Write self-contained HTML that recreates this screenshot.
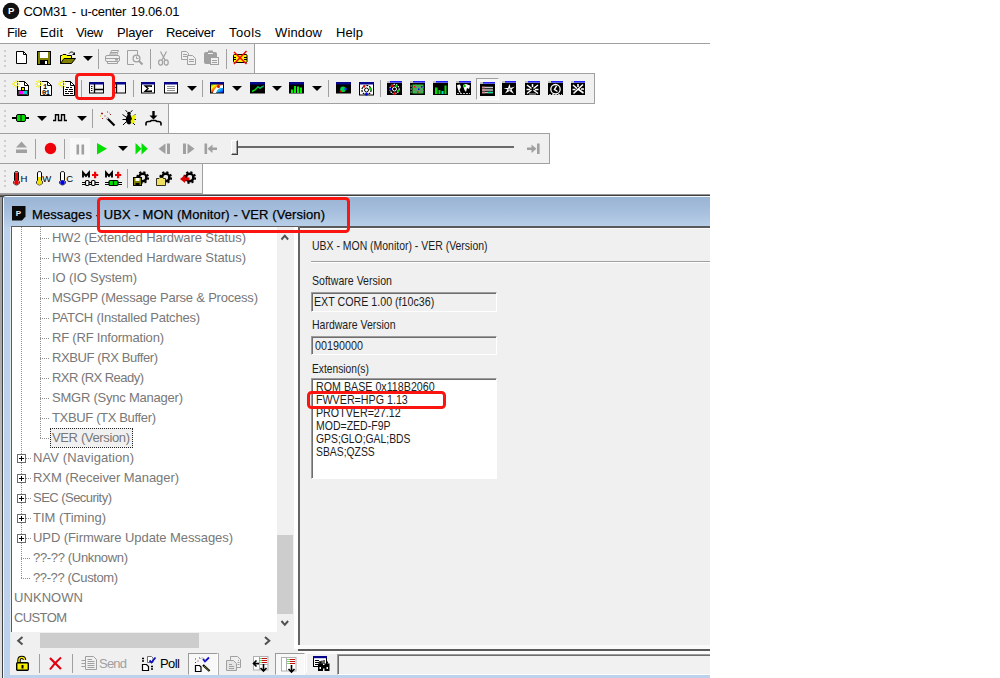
<!DOCTYPE html>
<html><head><meta charset="utf-8"><title>u-center</title>
<style>
html,body{margin:0;padding:0;background:#fff;}
body{width:1000px;height:678px;position:relative;overflow:hidden;font-family:"Liberation Sans",sans-serif;}
.t{position:absolute;white-space:nowrap;line-height:20px;height:20px;font-family:"Liberation Sans",sans-serif;}
.a{position:absolute;}
.tb{position:absolute;left:0;height:29px;background:#f0f0f0;border-right:1px solid #a0a0a0;border-bottom:1px solid #a0a0a0;border-top:1px solid #a0a0a0;}
.grip{position:absolute;left:4px;width:2px;height:17px;background:repeating-linear-gradient(to bottom,#cecece 0,#cecece 2px,transparent 2px,transparent 5px);}
.sep{position:absolute;width:1px;height:22px;background:#a0a0a0;}
svg{position:absolute;overflow:visible;}
.dd{position:absolute;width:0;height:0;border-left:5px solid transparent;border-right:5px solid transparent;border-top:5px solid #000;}
.fld{box-sizing:border-box;border:1px solid;border-color:#9c9c9c #fff #fff #9c9c9c;box-shadow:inset 1px 1px 0 #6e6e6e;}

</style></head>
<body>
<!-- app title icon -->
<svg class="a" style="left:2px;top:2px" width="18" height="18" viewBox="0 0 18 18"><circle cx="9" cy="9" r="8.3" fill="#111"/><text x="9.2" y="12.4" font-family="Liberation Sans, sans-serif" font-size="9.5" font-weight="bold" fill="#fff" text-anchor="middle">P</text></svg>
<div class="a" style="left:0;top:43px;width:710px;height:1px;background:#a0a0a0"></div>
<!-- toolbars -->
<div class="tb" style="top:43px;width:254px"></div>
<div class="tb" style="top:73px;width:594px"></div>
<div class="tb" style="top:103px;width:168px"></div>
<div class="tb" style="top:133px;width:549px"></div>
<div class="tb" style="top:163px;width:202px"></div>
<div class="grip" style="top:50px"></div>
<div class="grip" style="top:80px"></div>
<div class="grip" style="top:110px"></div>
<div class="grip" style="top:140px"></div>
<div class="grip" style="top:170px"></div>
<svg style="left:16px;top:51px" width="12" height="14" viewBox="0 0 12 14" ><path d="M0.5 0.5H7.5L10.5 3.5V12.5H0.5Z" fill="#fff" stroke="#000"/><path d="M7.5 0.5V3.5H10.5" fill="none" stroke="#000"/></svg>
<svg style="left:37px;top:51px" width="15" height="14" viewBox="0 0 15 14" ><rect x="0.5" y="0.5" width="13" height="13" fill="#808000" stroke="#000"/><rect x="3" y="1" width="8" height="6" fill="#fff"/><rect x="3" y="9" width="8" height="4" fill="#000"/><rect x="8" y="10" width="2" height="3" fill="#fff"/></svg>
<svg style="left:60px;top:51px" width="16" height="14" viewBox="0 0 16 14" ><path d="M0.5 12.5V4.5H2L3 3.5H6L7 4.5H11.5V7" fill="#ffff00" stroke="#000"/><path d="M0.5 12.5L4 7.5H15.5L11.5 12.5Z" fill="#808000" stroke="#000"/><path d="M9 2.5C10.5 0.5 13 0.5 14 2.5" fill="none" stroke="#000"/><path d="M15 1V4H12Z" fill="#000"/></svg>
<div class="dd" style="left:83px;top:56px"></div>
<div class="sep" style="left:98px;top:49px;height:20px"></div>
<svg style="left:105px;top:50px" width="16" height="15" viewBox="0 0 16 15" ><path d="M4.5 5.5L6.5 0.5H13.5L11.5 5.5" fill="none" stroke="#a0a0a0"/><path d="M6 2.5H12M5.5 4H11" stroke="#a0a0a0"/><rect x="0.5" y="5.5" width="14" height="6" rx="1.5" fill="none" stroke="#a0a0a0"/><path d="M2.5 11.5V13.5H12.5V11.5M1 8.5H14" fill="none" stroke="#a0a0a0"/><rect x="10" y="9" width="3" height="1.5" fill="#a0a0a0"/></svg>
<svg style="left:127px;top:50px" width="17" height="16" viewBox="0 0 17 16" ><path d="M10.5 5V0.5H0.5V14.5H7" fill="none" stroke="#a0a0a0"/><circle cx="9.5" cy="8.5" r="3.4" fill="none" stroke="#a0a0a0" stroke-width="1.3"/><path d="M12 11L15.5 14.5" stroke="#a0a0a0" stroke-width="2"/><path d="M9.5 6.5V8.5H11.5" fill="none" stroke="#a0a0a0"/></svg>
<div class="sep" style="left:150px;top:49px;height:20px"></div>
<svg style="left:158px;top:51px" width="11" height="15" viewBox="0 0 11 15" ><path d="M2.5 0.5L7 9M8.5 0.5L4 9" stroke="#a0a0a0" fill="none" stroke-width="1.2"/><ellipse cx="2.6" cy="11.5" rx="2" ry="2.6" fill="none" stroke="#a0a0a0" stroke-width="1.2"/><ellipse cx="8.2" cy="11.5" rx="2" ry="2.6" fill="none" stroke="#a0a0a0" stroke-width="1.2"/></svg>
<svg style="left:181px;top:51px" width="16" height="14" viewBox="0 0 16 14" ><path d="M0.5 0.5H5.5L7.5 2.5V8.5H0.5Z" fill="#f0f0f0" stroke="#a0a0a0"/><path d="M2 3.5H6M2 5.5H6" stroke="#a0a0a0"/><path d="M6.5 4.5H11.5L14.5 7.5V13.5H6.5Z" fill="#f0f0f0" stroke="#a0a0a0"/><path d="M8 8.5H13M8 10.5H13" stroke="#a0a0a0"/></svg>
<svg style="left:204px;top:50px" width="16" height="16" viewBox="0 0 16 16" ><rect x="0.5" y="2.5" width="12" height="11" rx="1" fill="#a0a0a0" stroke="#a0a0a0"/><rect x="4" y="0.5" width="5" height="3" fill="#a0a0a0"/><rect x="4" y="3" width="5" height="1" fill="#f0f0f0"/><rect x="6.5" y="7.5" width="8" height="7" fill="#f0f0f0" stroke="#a0a0a0"/><path d="M8 10.5H13M8 12.5H13" stroke="#a0a0a0"/></svg>
<div class="sep" style="left:226px;top:49px;height:20px"></div>
<svg style="left:233px;top:51px" width="15" height="15" viewBox="0 0 15 15" ><rect x="0.500" y="3.500" width="13.500" height="8" rx="1" fill="#ffee00" stroke="#000"/><path d="M0.500 6.500H3M11 6.500H14M0.500 8.500H3M11 8.500H14" stroke="#000"/><path d="M1 1L13.500 13M13.500 0L1 13" stroke="#f00" stroke-width="1.500"/></svg>
<svg style="left:12px;top:80px" width="18" height="16" viewBox="0 0 18 16" ><path d="M5.5 1.5H12.5L16.5 5.5V15.5H5.5Z" fill="#fff" stroke="#000"/><path d="M12.5 1.5V5.5H16.5" fill="none" stroke="#000"/><rect x="9.500" y="7.500" width="3" height="3" fill="#ffee00" stroke="#000" stroke-width="1"/><rect x="7" y="11" width="4" height="3" fill="#ff00ff"/><rect x="11" y="11" width="4" height="3" fill="#00d0d0"/><rect x="6.5" y="10.5" width="9" height="4" fill="none" stroke="#000" stroke-width="0.8"/><path d="M4 0V8M0 4H8M1.2 1.2L6.8 6.8M6.8 1.2L1.2 6.8" stroke="#f0f000" stroke-width="1"/><rect x="3" y="3" width="2" height="2" fill="#fff"/></svg>
<svg style="left:35px;top:80px" width="18" height="16" viewBox="0 0 18 16" ><path d="M5.5 1.5H12.5L16.5 5.5V15.5H5.5Z" fill="#fff" stroke="#000"/><path d="M12.5 1.5V5.5H16.5" fill="none" stroke="#000"/><text x="8" y="9" font-family="Liberation Mono, monospace" font-size="7" font-weight="bold" fill="#000">1</text><text x="7" y="15" font-family="Liberation Mono, monospace" font-size="7" font-weight="bold" fill="#000" letter-spacing="-0.5">01</text><path d="M4 0V8M0 4H8M1.2 1.2L6.8 6.8M6.8 1.2L1.2 6.8" stroke="#f0f000" stroke-width="1"/><rect x="3" y="3" width="2" height="2" fill="#fff"/></svg>
<svg style="left:58px;top:80px" width="18" height="16" viewBox="0 0 18 16" ><path d="M5.5 1.5H12.5L16.5 5.5V15.5H5.5Z" fill="#fff" stroke="#000"/><path d="M12.5 1.5V5.5H16.5" fill="none" stroke="#000"/><path d="M8 7.5H11M12 7.5H14M7 9.5H10M11 9.5H15M7 11.5H9M10 11.5H15M7 13.5H11M12 13.5H15" stroke="#000" stroke-width="1.2"/><path d="M4 0V8M0 4H8M1.2 1.2L6.8 6.8M6.8 1.2L1.2 6.8" stroke="#f0f000" stroke-width="1"/><rect x="3" y="3" width="2" height="2" fill="#fff"/></svg>
<div class="sep" style="left:81px;top:80px;height:17px"></div>
<svg style="left:89px;top:82px" width="15" height="13" viewBox="0 0 15 13" ><rect x="0.5" y="0.5" width="14" height="10.5" fill="#f4f4f4" stroke="#000"/><rect x="0" y="0" width="15" height="2.5" fill="#06068c"/><path d="M5.5 2V11M5.5 7.5H14" stroke="#000" stroke-width="1.3"/><path d="M2 4.5H4M2 6.5H4M2 8.5H4" stroke="#000" stroke-width="1" stroke-dasharray="1 0.6"/></svg>
<svg style="left:112px;top:82px" width="14" height="13" viewBox="0 0 14 13" ><rect x="0.5" y="0.5" width="13" height="10.5" fill="#f4f4f4" stroke="#000"/><rect x="0" y="0" width="14" height="2.5" fill="#06068c"/><path d="M4.5 2V11" stroke="#000" stroke-width="1.3"/><path d="M2 5.5H4" stroke="#000"/></svg>
<div class="sep" style="left:133px;top:80px;height:17px"></div>
<svg style="left:141px;top:82px" width="14" height="13" viewBox="0 0 14 13" ><rect x="0.5" y="0.5" width="13" height="10.5" fill="#fff" stroke="#000"/><rect x="0" y="0" width="14" height="2.5" fill="#06068c"/><path d="M10.3 5V4H4.2L7 6.6L4.2 9.200H10.3V8.200" fill="none" stroke="#000" stroke-width="1.400"/></svg>
<svg style="left:164px;top:82px" width="14" height="13" viewBox="0 0 14 13" ><rect x="0.5" y="0.5" width="13" height="10.5" fill="#fff" stroke="#000"/><rect x="0" y="0" width="14" height="2.500" fill="#06068c"/><path d="M3 4.500H11M3 6.500H11M3 8.500H11" stroke="#909090" stroke-width="1"/></svg>
<div class="dd" style="left:187px;top:86px"></div>
<div class="sep" style="left:202px;top:80px;height:17px"></div>
<svg style="left:210px;top:82px" width="14" height="13" viewBox="0 0 14 13" ><defs><linearGradient id="rb" x1="0" y1="0" x2="1" y2="1"><stop offset="0" stop-color="#00a000"/><stop offset="0.3" stop-color="#ffff00"/><stop offset="0.5" stop-color="#ff4000"/><stop offset="0.7" stop-color="#00c0ff"/><stop offset="1" stop-color="#0000ff"/></linearGradient></defs><rect x="0.5" y="0.5" width="13" height="10.5" fill="url(#rb)" stroke="#000"/><rect x="0" y="0" width="14" height="2.5" fill="#06068c"/><path d="M3 11C4 7 7 4 10 3.5L13 3V6C10 6 8 6 6 11Z" fill="#fff"/><circle cx="8.5" cy="4.5" r="1.5" fill="#c02000"/></svg>
<div class="dd" style="left:232px;top:86px"></div>
<svg style="left:249.5px;top:82px" width="15" height="13" viewBox="0 0 15 13" ><rect x="0.5" y="0.5" width="14" height="10.5" fill="#000" stroke="#000"/><rect x="0" y="0" width="15" height="2.5" fill="#06068c"/><path d="M2 9.5L5 8L8 4.8L10 6.2L13.500 4" fill="none" stroke="#00e000" stroke-width="1.4"/><path d="M8 4.800L10 6.200L13.500 4" fill="none" stroke="#00a0a0" stroke-width="1"/></svg>
<div class="dd" style="left:272px;top:86px"></div>
<svg style="left:289px;top:82px" width="15" height="13" viewBox="0 0 15 13" ><rect x="0.5" y="0.5" width="14" height="10.5" fill="#000" stroke="#000"/><rect x="0" y="0" width="15" height="2.5" fill="#06068c"/><path d="M3 11V7.500M6 11V4M9 11V4.500M12 11V5.500" stroke="#00f000" stroke-width="2"/></svg>
<div class="dd" style="left:312px;top:86px"></div>
<div class="sep" style="left:328px;top:80px;height:17px"></div>
<svg style="left:336px;top:82px" width="15" height="13" viewBox="0 0 15 13" ><rect x="0.5" y="0.5" width="14" height="10.5" fill="#000" stroke="#000"/><rect x="0" y="0" width="15" height="2.5" fill="#06068c"/><circle cx="7" cy="7.200" r="2.800" fill="#00d040"/><circle cx="9.5" cy="7" r="1.3" fill="#0040ff"/><circle cx="4.5" cy="9.5" r="1" fill="#d00000"/></svg>
<svg style="left:359px;top:82px" width="15" height="14" viewBox="0 0 15 14" ><rect x="0.5" y="0.5" width="14" height="12.5" fill="#fff" stroke="#000"/><rect x="0" y="0" width="15" height="2.5" fill="#06068c"/><circle cx="7.5" cy="8" r="4.6" fill="none" stroke="#000" stroke-width="1.2" stroke-dasharray="2 1"/><circle cx="7.5" cy="8" r="2" fill="none" stroke="#000" stroke-width="1"/><circle cx="5" cy="4.5" r="1.2" fill="#f00000"/><circle cx="11.5" cy="7" r="1.4" fill="#00d000"/><circle cx="7.5" cy="12" r="1.5" fill="#0000ff"/></svg>
<div class="sep" style="left:380px;top:80px;height:17px"></div>
<svg style="left:387px;top:81px" width="15" height="14" viewBox="0 0 15 14" ><rect x="0" y="0.5" width="15" height="13.5" fill="#000"/><rect x="0" y="0" width="15" height="2" fill="#c0c0c0"/><rect x="3" y="0" width="12" height="1.6" fill="#2020ff"/><circle cx="7.5" cy="8" r="4.6" fill="none" stroke="#fff" stroke-width="1.2" stroke-dasharray="1.5 1"/><circle cx="7.5" cy="8" r="2" fill="none" stroke="#fff" stroke-width="1"/><circle cx="5" cy="4.8" r="1.3" fill="#f00000"/><circle cx="9.5" cy="5" r="1.2" fill="#00d000"/><circle cx="3" cy="8" r="1.2" fill="#0000ff"/><circle cx="11" cy="10" r="1.2" fill="#00d000"/><circle cx="7.5" cy="12.5" r="1.2" fill="#f00000"/></svg>
<svg style="left:410px;top:81px" width="15" height="14" viewBox="0 0 15 14" ><rect x="0" y="0.5" width="15" height="13.5" fill="#000"/><rect x="0" y="0" width="15" height="2" fill="#c0c0c0"/><rect x="3" y="0" width="12" height="1.6" fill="#2020ff"/><rect x="2.5" y="3.5" width="11" height="9" fill="#30c040"/><path d="M2.5 6.5H13.5M2.5 9.5H13.5M6 3.5V12.5M10 3.5V12.5" stroke="#808080" stroke-width="0.8"/><rect x="4" y="5" width="1.5" height="1.5" fill="#f00"/><rect x="8" y="7.5" width="1.5" height="1.5" fill="#00f"/><rect x="11" y="5" width="1.5" height="1.5" fill="#00f"/><rect x="7" y="10.5" width="1.5" height="1.5" fill="#f00"/><path d="M0.5 5H2M0.5 8H2M0.5 11H2" stroke="#c0c0c0"/></svg>
<svg style="left:433px;top:81px" width="15" height="14" viewBox="0 0 15 14" ><rect x="0" y="0.5" width="15" height="13.5" fill="#000"/><rect x="0" y="0" width="15" height="2" fill="#c0c0c0"/><rect x="3" y="0" width="12" height="1.6" fill="#2020ff"/><rect x="2" y="6.500" width="2.5" height="6.500" fill="#00e000"/><rect x="5.500" y="9" width="2" height="4" fill="#00e000"/><rect x="8.500" y="10" width="2" height="3" fill="#00e0e0"/><rect x="11.500" y="4.500" width="2" height="8.500" fill="#00e000"/></svg>
<svg style="left:456px;top:81px" width="15" height="14" viewBox="0 0 15 14" ><rect x="0" y="0.5" width="15" height="13.5" fill="#000"/><rect x="0" y="0" width="15" height="2" fill="#c0c0c0"/><rect x="3" y="0" width="12" height="1.6" fill="#2020ff"/><path d="M1 4L4 3.500L5 6L3.500 9L5 12L3 11L1.500 7ZM7 4L10 3L14 4.500L13 8L11 7L10 11L8.500 9L7.500 6Z" fill="#fff"/><circle cx="8.500" cy="5" r="1.300" fill="#00d000"/><path d="M1 12.500H14" stroke="#c0c0c0" stroke-dasharray="2 1"/></svg>
<div class="a" style="left:476px;top:78px;width:23px;height:22px;box-sizing:border-box;background:#f6f6f6;border:1px solid;border-color:#a0a0a0 #fff #fff #a0a0a0"></div>
<svg style="left:480px;top:82px" width="15" height="14" viewBox="0 0 15 14" ><rect x="0" y="0.5" width="15" height="13.5" fill="#000"/><rect x="0" y="0" width="15" height="2" fill="#c0c0c0"/><rect x="3" y="0" width="12" height="1.6" fill="#2020ff"/><path d="M2 5.500H13M2 8H13M2 10.500H13" stroke="#c8c8c8" stroke-width="1.300"/><path d="M2 5.500H5M2 8H5M2 10.500H5" stroke="#d09090" stroke-width="1.300"/><path d="M8 10.500H13" stroke="#00e0a0" stroke-width="1.300"/></svg>
<svg style="left:502px;top:81px" width="14" height="14" viewBox="0 0 14 14" ><rect x="0" y="0.5" width="14" height="13.5" fill="#000"/><rect x="0" y="0" width="14" height="2" fill="#c0c0c0"/><rect x="3" y="0" width="11" height="1.6" fill="#2020ff"/><path d="M7.500 3L8.500 7L13 5.500L9.500 8.500L12 13L7.500 10L3 12.500L5.500 8.500L1.500 7L6 7Z" fill="#fff"/><circle cx="7.500" cy="8.500" r="1.200" fill="#808080"/></svg>
<svg style="left:525px;top:81px" width="15" height="14" viewBox="0 0 15 14" ><rect x="0" y="0.5" width="15" height="13.5" fill="#000"/><rect x="0" y="0" width="15" height="2" fill="#c0c0c0"/><rect x="3" y="0" width="12" height="1.6" fill="#2020ff"/><path d="M2 4L6.500 7.500M13 4L8.500 7.500M2 12.500L6.500 9M13 12.500L8.500 9M7.500 3V6M1.500 8.500H5M10 8.500H13.500" stroke="#fff" stroke-width="1.500"/><path d="M4 13H11" stroke="#c0c0c0"/></svg>
<svg style="left:548px;top:81px" width="15" height="14" viewBox="0 0 15 14" ><rect x="0" y="0.5" width="15" height="13.5" fill="#000"/><rect x="0" y="0" width="15" height="2" fill="#c0c0c0"/><rect x="3" y="0" width="12" height="1.6" fill="#2020ff"/><circle cx="7.500" cy="8.200" r="4.700" fill="none" stroke="#fff" stroke-width="1.300"/><path d="M8.500 5L6.500 8.500L9.500 10.500" fill="none" stroke="#fff" stroke-width="1.500"/><path d="M1 13.500H14" stroke="#c0c0c0" stroke-dasharray="2 1"/></svg>
<svg style="left:571px;top:81px" width="14" height="14" viewBox="0 0 14 14" ><rect x="0" y="0.5" width="14" height="13.5" fill="#000"/><rect x="0" y="0" width="14" height="2" fill="#c0c0c0"/><rect x="3" y="0" width="11" height="1.6" fill="#2020ff"/><path d="M2 4L6 7.500M12 3.500L2.500 12.500M7 8L12.500 12M7 3V6M1.500 8.500H4.500M10 8H13" stroke="#fff" stroke-width="1.600"/></svg>
<svg style="left:12px;top:114px" width="18" height="8" viewBox="0 0 18 8" ><path d="M0 4H17" stroke="#000" stroke-width="2"/><rect x="4.500" y="0.500" width="9" height="7" rx="1.500" fill="#00e000" stroke="#000"/><path d="M9 1V7" stroke="#000" stroke-width="1"/></svg>
<div class="dd" style="left:37px;top:116px"></div>
<svg style="left:53px;top:114px" width="15" height="8" viewBox="0 0 15 8" ><path d="M0 6.500H2.500V0.800H5.500V6.500H8.500V0.800H11.500V6.500H14" fill="none" stroke="#000" stroke-width="1.400"/></svg>
<div class="dd" style="left:77px;top:116px"></div>
<div class="sep" style="left:92px;top:109px;height:19px"></div>
<svg style="left:99px;top:111px" width="17" height="16" viewBox="0 0 17 16" ><path d="M8 7L15.500 14.500" stroke="#000" stroke-width="2.200"/><path d="M7 6L9 8" stroke="#e0e0e0" stroke-width="1.500"/><path d="M2 2.500H4M3 1.500V3.500M8 1H9M11 3.500H12M3 7.500H4M5.500 5H6.500" stroke="#a02020" stroke-width="1"/><path d="M10 2H11M1 5H2" stroke="#c0c000" stroke-width="1"/></svg>
<svg style="left:122px;top:110px" width="16" height="17" viewBox="0 0 16 17" ><ellipse cx="7" cy="9.500" rx="3.200" ry="5" fill="#000"/><circle cx="7" cy="3.500" r="1.800" fill="#000"/><path d="M5.500 2L3.500 0.500M8.500 2L10.500 0.500M4 7L0.500 4.500M4 9.500H0.500M4 12L1 15M10 7L13.500 4.500M10 9.500H14M10 12L13 15" stroke="#000" stroke-width="1"/><path d="M9 6L13 5L14 8L12 10L13 12L10 14L8.500 11L10 9Z" fill="#f0f000"/></svg>
<svg style="left:145px;top:111px" width="17" height="15" viewBox="0 0 17 15" ><path d="M8.500 0V6" stroke="#000" stroke-width="2.400"/><path d="M4.500 4.500H12.500L8.500 8.500Z" fill="#000"/><path d="M1 14.500V12.500C1 11 2 10.500 3.500 10.500H5L6.500 9.500H10.500L12 10.500H13.500C15 10.500 16 11 16 12.500V14.500" fill="none" stroke="#000" stroke-width="1.600"/></svg>
<svg style="left:15px;top:141px" width="13" height="13" viewBox="0 0 13 13" ><path d="M6.500 0.500L12 6.500H1Z" fill="#a0a0a0"/><rect x="1" y="8.500" width="11" height="3.500" fill="#a0a0a0"/></svg>
<div class="sep" style="left:35px;top:139px;height:20px"></div>
<svg style="left:44px;top:142px" width="13" height="13" viewBox="0 0 13 13" ><circle cx="6.500" cy="6.500" r="5.700" fill="#f00008"/></svg>
<div class="sep" style="left:64px;top:139px;height:20px"></div>
<div class="a" style="left:70px;top:138px;width:20px;height:22px;background:#f8f8f8"></div>
<svg style="left:76px;top:144px" width="9" height="11" viewBox="0 0 9 11" ><rect x="0.500" y="0.500" width="2.600" height="10" fill="#a0a0a0"/><rect x="5.500" y="0.500" width="2.600" height="10" fill="#a0a0a0"/></svg>
<svg style="left:96px;top:143px" width="12" height="12" viewBox="0 0 12 12" ><path d="M1 0L11 5.800L1 11.600Z" fill="#00e000"/></svg>
<div class="dd" style="left:118px;top:146px"></div>
<svg style="left:135px;top:143px" width="14" height="12" viewBox="0 0 14 12" ><path d="M0.500 0L6.500 5.800L0.500 11.600ZM6.500 0L12.800 5.800L6.500 11.600Z" fill="#00e000"/></svg>
<svg style="left:158px;top:143px" width="13" height="12" viewBox="0 0 13 12" ><path d="M7.500 0.500L0.500 5.800L7.500 11Z" fill="#a0a0a0"/><rect x="9" y="0.500" width="3" height="10.500" fill="#a0a0a0"/></svg>
<svg style="left:182px;top:143px" width="13" height="12" viewBox="0 0 13 12" ><path d="M5.500 0.500L12.500 5.800L5.500 11Z" fill="#a0a0a0"/><rect x="1" y="0.500" width="3" height="10.500" fill="#a0a0a0"/></svg>
<svg style="left:204px;top:143px" width="14" height="12" viewBox="0 0 14 12" ><rect x="0.500" y="0.500" width="2.600" height="10.500" fill="#a0a0a0"/><path d="M3.500 5.800L8.500 1.500V10Z" fill="#a0a0a0"/><rect x="8" y="4.500" width="5" height="2.500" fill="#a0a0a0"/></svg>
<div class="a" style="left:237px;top:146px;width:277px;height:2px;background:#6a6a6a"></div>
<div class="a" style="left:231px;top:140px;width:7px;height:15px;box-sizing:border-box;background:#f0f0f0;border:1px solid;border-color:#fff #404040 #404040 #fff;box-shadow:inset -1px -1px 0 #a0a0a0"></div>
<svg style="left:526px;top:143px" width="15" height="12" viewBox="0 0 15 12" ><rect x="11" y="0.500" width="2.600" height="10.500" fill="#a0a0a0"/><path d="M10.500 5.800L5.500 1.500V10Z" fill="#a0a0a0"/><rect x="1" y="4.500" width="5" height="2.500" fill="#a0a0a0"/></svg>
<svg style="left:13px;top:171px" width="7" height="15" viewBox="0 0 7 15" ><path d="M1.500 1.500C1.500 0.300 5.500 0.300 5.500 1.500V9.500C7 10.500 7 13.500 3.500 13.900C0 13.500 0 10.500 1.500 9.500Z" fill="#fff" stroke="#000" stroke-width="1"/><rect x="2" y="1.5" width="3" height="9.5" fill="#f00000"/><circle cx="3.500" cy="11.500" r="2.300" fill="#f00000"/></svg>
<span class="a" style="left:20.5px;top:172.500px;font-size:9.500px;line-height:12px;color:#000;font-family:'Liberation Sans',sans-serif">H</span>
<svg style="left:36px;top:171px" width="7" height="15" viewBox="0 0 7 15" ><path d="M1.500 1.500C1.500 0.300 5.500 0.300 5.500 1.500V9.500C7 10.500 7 13.500 3.500 13.900C0 13.500 0 10.500 1.500 9.500Z" fill="#fff" stroke="#000" stroke-width="1"/><rect x="2" y="6" width="3" height="5" fill="#f0e000"/><circle cx="3.500" cy="11.500" r="2.300" fill="#f0e000"/></svg>
<span class="a" style="left:42.3px;top:172.500px;font-size:9.500px;line-height:12px;color:#000;font-family:'Liberation Sans',sans-serif">W</span>
<svg style="left:59px;top:171px" width="7" height="15" viewBox="0 0 7 15" ><path d="M1.500 1.500C1.500 0.300 5.500 0.300 5.500 1.500V9.500C7 10.500 7 13.500 3.500 13.900C0 13.500 0 10.500 1.500 9.500Z" fill="#fff" stroke="#000" stroke-width="1"/><rect x="2" y="9.5" width="3" height="1.5" fill="#0000e8"/><circle cx="3.500" cy="11.500" r="2.300" fill="#0000e8"/></svg>
<span class="a" style="left:66.3px;top:172.500px;font-size:9.500px;line-height:12px;color:#000;font-family:'Liberation Sans',sans-serif">C</span>
<svg style="left:82px;top:171px" width="17" height="15" viewBox="0 0 17 15" ><path d="M1 6.500V1.600L4 5L7 1.600V6.500" fill="none" stroke="#000" stroke-width="1.900"/><path d="M10 4H16.200M13.100 0.800V7.200" stroke="#f00000" stroke-width="2.200"/><path d="M0 11.500H17M0 13.500H17" stroke="#000" stroke-width="1"/><rect x="3.500" y="9.500" width="3.500" height="5" rx="1.200" fill="#fff" stroke="#000" stroke-width="1.200"/><rect x="9.500" y="9.500" width="3.500" height="5" rx="1.200" fill="#fff" stroke="#000" stroke-width="1.200"/></svg>
<svg style="left:105px;top:171px" width="17" height="15" viewBox="0 0 17 15" ><path d="M1 6.500V1.600L4 5L7 1.600V6.500" fill="none" stroke="#000" stroke-width="1.900"/><path d="M10 4H16.200M13.100 0.800V7.200" stroke="#f00000" stroke-width="2.200"/><path d="M0 11.500H17M0 13.500H17" stroke="#000" stroke-width="1"/><rect x="4" y="9.500" width="9" height="5" rx="1.200" fill="#00e000" stroke="#000" stroke-width="1.200"/><path d="M8.500 9.500V14.500" stroke="#000" stroke-width="1.200"/></svg>
<div class="sep" style="left:127px;top:169px;height:19px"></div>
<svg style="left:133px;top:171px" width="16" height="15" viewBox="0 0 16 15" ><g transform="translate(9.700 6.500)"><circle r="3.700" fill="none" stroke="#000" stroke-width="2.500"/><circle r="5.400" fill="none" stroke="#000" stroke-width="2" stroke-dasharray="2.120 2.120"/><circle cx="0.500" cy="-0.500" r="1.800" fill="#e8e8e8"/></g><rect x="0.500" y="6.500" width="8" height="8" fill="#808000" stroke="#000"/><rect x="2.500" y="7" width="4" height="3" fill="#fff"/><rect x="2.500" y="12" width="4" height="2.500" fill="#000"/></svg>
<svg style="left:156px;top:171px" width="16" height="15" viewBox="0 0 16 15" ><g transform="translate(9.700 6.500)"><circle r="3.700" fill="none" stroke="#000" stroke-width="2.500"/><circle r="5.400" fill="none" stroke="#000" stroke-width="2" stroke-dasharray="2.120 2.120"/><circle cx="0.500" cy="-0.500" r="1.800" fill="#e8e8e8"/></g><path d="M0.500 14.500V7.500H3L4 6.500H6.500L7.500 7.500H9.500V14.500Z" fill="#f0e060" stroke="#000" stroke-width="0.800"/></svg>
<svg style="left:180px;top:171px" width="16" height="15" viewBox="0 0 16 15" ><g transform="translate(9.700 6.500)"><circle r="3.700" fill="none" stroke="#000" stroke-width="2.500"/><circle r="5.400" fill="none" stroke="#000" stroke-width="2" stroke-dasharray="2.120 2.120"/><circle cx="0.500" cy="-0.500" r="1.800" fill="#e8e8e8"/></g><path d="M0 8L5 4V6.500H9.500V9.500H5V12Z" fill="#e00000"/></svg>
<!-- child window frame -->
<div class="a" style="left:0;top:194px;width:710px;height:484px;background:linear-gradient(to bottom,#b0b0b0 0,#404040 2px,#404040 3px,#9a9a9a 3px,#a8a8a8 30%,#e4e4e4 100%)"></div>
<div class="a" style="left:2px;top:195px;width:708px;height:483px;background:#404040;border-top-left-radius:4px"></div>
<div class="a" style="left:3px;top:196px;width:707px;height:482px;background:#f4f8fc;border-top-left-radius:3px"></div>
<div class="a" style="left:4px;top:197px;width:706px;height:481px;background:#bcd2ec"></div>
<div class="a" style="left:4px;top:197px;width:706px;height:30px;background:linear-gradient(to bottom,#9ab4d5 0%,#a6bfdd 50%,#bad0e9 100%)"></div>
<!-- window icon -->
<svg class="a" style="left:12px;top:206px" width="14" height="15" viewBox="0 0 14 15"><path d="M0 0H13.5V10.5L10 14.500H0Z" fill="#0a0a0a"/><text x="6.500" y="10" font-family="Liberation Sans, sans-serif" font-size="8" font-weight="bold" fill="#f0f0f0" text-anchor="middle">P</text></svg>
<!-- tree pane -->
<div class="a" style="left:10px;top:227px;width:1px;height:423px;background:#e4ebf3"></div><div class="a" style="left:11px;top:226px;width:287px;height:423px;background:#fff;border-left:1px solid #5a5a5a;border-top:1px solid #5a5a5a;box-sizing:border-box"></div>
<div class="a" style="left:21px;top:227px;width:1px;height:352px;background:repeating-linear-gradient(to bottom,#909090 0,#909090 1px,transparent 1px,transparent 2px)"></div>
<div class="a" style="left:40px;top:227px;width:1px;height:212px;background:repeating-linear-gradient(to bottom,#909090 0,#909090 1px,transparent 1px,transparent 2px)"></div>
<div class="a" style="left:40px;top:238px;width:10px;height:1px;background:repeating-linear-gradient(to right,#909090 0,#909090 1px,transparent 1px,transparent 2px)"></div>
<div class="a" style="left:40px;top:258px;width:10px;height:1px;background:repeating-linear-gradient(to right,#909090 0,#909090 1px,transparent 1px,transparent 2px)"></div>
<div class="a" style="left:40px;top:278px;width:10px;height:1px;background:repeating-linear-gradient(to right,#909090 0,#909090 1px,transparent 1px,transparent 2px)"></div>
<div class="a" style="left:40px;top:298px;width:10px;height:1px;background:repeating-linear-gradient(to right,#909090 0,#909090 1px,transparent 1px,transparent 2px)"></div>
<div class="a" style="left:40px;top:318px;width:10px;height:1px;background:repeating-linear-gradient(to right,#909090 0,#909090 1px,transparent 1px,transparent 2px)"></div>
<div class="a" style="left:40px;top:338px;width:10px;height:1px;background:repeating-linear-gradient(to right,#909090 0,#909090 1px,transparent 1px,transparent 2px)"></div>
<div class="a" style="left:40px;top:358px;width:10px;height:1px;background:repeating-linear-gradient(to right,#909090 0,#909090 1px,transparent 1px,transparent 2px)"></div>
<div class="a" style="left:40px;top:378px;width:10px;height:1px;background:repeating-linear-gradient(to right,#909090 0,#909090 1px,transparent 1px,transparent 2px)"></div>
<div class="a" style="left:40px;top:398px;width:10px;height:1px;background:repeating-linear-gradient(to right,#909090 0,#909090 1px,transparent 1px,transparent 2px)"></div>
<div class="a" style="left:40px;top:418px;width:10px;height:1px;background:repeating-linear-gradient(to right,#909090 0,#909090 1px,transparent 1px,transparent 2px)"></div>
<div class="a" style="left:40px;top:438px;width:10px;height:1px;background:repeating-linear-gradient(to right,#909090 0,#909090 1px,transparent 1px,transparent 2px)"></div>
<div class="a" style="left:21px;top:558px;width:10px;height:1px;background:repeating-linear-gradient(to right,#909090 0,#909090 1px,transparent 1px,transparent 2px)"></div>
<div class="a" style="left:21px;top:578px;width:10px;height:1px;background:repeating-linear-gradient(to right,#909090 0,#909090 1px,transparent 1px,transparent 2px)"></div>
<div class="a" style="left:50px;top:428px;width:83px;height:20px;box-sizing:border-box;background:#f0f0f0;border:1px dotted #222"></div>
<div class="a" style="left:26px;top:458px;width:5px;height:1px;background:repeating-linear-gradient(to right,#909090 0,#909090 1px,transparent 1px,transparent 2px)"></div>
<svg class="a" style="left:17px;top:454px" width="9" height="9" viewBox="0 0 9 9"><rect x="0.500" y="0.500" width="8" height="8" fill="#fff" stroke="#6c6c6c"/><path d="M2 4.500H7M4.500 2V7" stroke="#000" stroke-width="1"/></svg>
<div class="a" style="left:26px;top:478px;width:5px;height:1px;background:repeating-linear-gradient(to right,#909090 0,#909090 1px,transparent 1px,transparent 2px)"></div>
<svg class="a" style="left:17px;top:474px" width="9" height="9" viewBox="0 0 9 9"><rect x="0.500" y="0.500" width="8" height="8" fill="#fff" stroke="#6c6c6c"/><path d="M2 4.500H7M4.500 2V7" stroke="#000" stroke-width="1"/></svg>
<div class="a" style="left:26px;top:498px;width:5px;height:1px;background:repeating-linear-gradient(to right,#909090 0,#909090 1px,transparent 1px,transparent 2px)"></div>
<svg class="a" style="left:17px;top:494px" width="9" height="9" viewBox="0 0 9 9"><rect x="0.500" y="0.500" width="8" height="8" fill="#fff" stroke="#6c6c6c"/><path d="M2 4.500H7M4.500 2V7" stroke="#000" stroke-width="1"/></svg>
<div class="a" style="left:26px;top:518px;width:5px;height:1px;background:repeating-linear-gradient(to right,#909090 0,#909090 1px,transparent 1px,transparent 2px)"></div>
<svg class="a" style="left:17px;top:514px" width="9" height="9" viewBox="0 0 9 9"><rect x="0.500" y="0.500" width="8" height="8" fill="#fff" stroke="#6c6c6c"/><path d="M2 4.500H7M4.500 2V7" stroke="#000" stroke-width="1"/></svg>
<div class="a" style="left:26px;top:538px;width:5px;height:1px;background:repeating-linear-gradient(to right,#909090 0,#909090 1px,transparent 1px,transparent 2px)"></div>
<svg class="a" style="left:17px;top:534px" width="9" height="9" viewBox="0 0 9 9"><rect x="0.500" y="0.500" width="8" height="8" fill="#fff" stroke="#6c6c6c"/><path d="M2 4.500H7M4.500 2V7" stroke="#000" stroke-width="1"/></svg>
<!-- vertical scrollbar -->
<div class="a" style="left:277px;top:227px;width:17px;height:405px;background:#f0f0f0"></div>
<div class="a" style="left:277px;top:535px;width:16px;height:79px;background:#cdcdcd"></div>
<svg class="a" style="left:280px;top:233px" width="10" height="8" viewBox="0 0 10 8"><path d="M1.500 6.500L4.800 2.700L8.100 6.500" fill="none" stroke="#505050" stroke-width="2"/></svg>
<svg class="a" style="left:280px;top:620px" width="10" height="8" viewBox="0 0 10 8"><path d="M1.500 1L4.800 4.800L8.100 1" fill="none" stroke="#505050" stroke-width="2"/></svg>
<!-- horizontal scrollbar -->
<div class="a" style="left:11px;top:632px;width:283px;height:17px;background:#f0f0f0"></div>
<div class="a" style="left:40px;top:633px;width:159px;height:15px;background:#cdcdcd"></div>
<svg class="a" style="left:16px;top:636px" width="8" height="10" viewBox="0 0 8 10"><path d="M6.500 1L2.200 4.800L6.500 8.600" fill="none" stroke="#505050" stroke-width="2"/></svg>
<svg class="a" style="left:264px;top:636px" width="8" height="10" viewBox="0 0 8 10"><path d="M1 1L5.300 4.800L1 8.600" fill="none" stroke="#505050" stroke-width="2"/></svg>
<!-- right pane -->
<div class="a" style="left:298px;top:226px;width:412px;height:425px;background:#f0f0f0"></div>
<div class="a" style="left:298px;top:226px;width:412px;height:2px;background:#5a5a5a"></div>
<div class="a" style="left:298px;top:226px;width:2px;height:419px;background:#646464"></div>
<div class="a" style="left:300px;top:228px;width:410px;height:1px;background:#fafafa"></div>
<div class="a" style="left:298px;top:645px;width:412px;height:4px;background:#fafafa"></div>
<div class="a" style="left:298px;top:649px;width:412px;height:2px;background:#5a5a5a"></div>
<div class="a" style="left:311px;top:261px;width:399px;height:1px;background:#a0a0a0"></div>
<div class="a" style="left:311px;top:262px;width:399px;height:1px;background:#fff"></div>
<!-- fields -->
<div class="a fld" style="left:311px;top:292px;width:186px;height:20px;background:#f0f0f0"></div>
<div class="a fld" style="left:311px;top:336px;width:186px;height:19px;background:#f0f0f0"></div>
<div class="a fld" style="left:311px;top:378px;width:186px;height:101px;background:#fff"></div>
<!-- bottom toolbar -->
<div class="a" style="left:10px;top:649px;width:288px;height:25.5px;background:#f0f0f0"></div>
<div class="a" style="left:298px;top:651px;width:412px;height:23.5px;background:#f0f0f0"></div>
<div class="a" style="left:298px;top:651px;width:412px;height:3px;background:#fbfbfb"></div>
<div class="a fld" style="left:337px;top:654px;width:373px;height:21px;background:#f1f1f1;border-right:none"></div>
<svg style="left:16px;top:656px" width="13" height="15" viewBox="0 0 13 15" ><path d="M3 7V4C3 0.500 8.500 0.500 8.500 4" fill="none" stroke="#000" stroke-width="3.400"/><path d="M3 7V4C3 0.500 8.500 0.500 8.500 4" fill="none" stroke="#ffee00" stroke-width="1.400"/><rect x="0.700" y="6.700" width="11.600" height="7.600" rx="1" fill="#f8f000" stroke="#000" stroke-width="1.400"/><rect x="5.500" y="9" width="2" height="3.500" fill="#000"/></svg>
<div class="sep" style="left:39px;top:654px;height:19px"></div>
<svg style="left:49px;top:657px" width="13" height="13" viewBox="0 0 13 13" ><path d="M1 1L12 12" stroke="#e00010" stroke-width="2.200"/><path d="M12 0.500C8 4 4 8 1 12.500" stroke="#e00010" stroke-width="2" fill="none"/></svg>
<div class="sep" style="left:72px;top:654px;height:19px"></div>
<svg style="left:81px;top:655px" width="17" height="16" viewBox="0 0 17 16" ><path d="M4.500 1.500H12.500L15.500 4.500V14.500H4.500Z" fill="#f0f0f0" stroke="#a0a0a0"/><path d="M6.500 4.500H11M6.500 6.500H13.500M6.500 8.500H13.500M6.500 10.500H13.500M6.500 12.500H13.500" stroke="#a0a0a0"/><path d="M0.500 5.500H4M0.500 8.500H4M0.500 11.500H4" stroke="#a0a0a0"/></svg>
<svg style="left:141px;top:656px" width="16" height="15" viewBox="0 0 16 15" ><path d="M6.500 0.500H10.500L12 2V6.500H6.500Z" fill="#fff" stroke="#606060" stroke-width="0.900"/><path d="M8.500 4.500L10.500 6.500L14.500 1.500" fill="none" stroke="#1010c0" stroke-width="1.800"/><path d="M1.500 8.500H5.500L7.500 10.500V14.500H1.500Z" fill="#fff" stroke="#000" stroke-width="1.200"/><path d="M1 2.500H3M1 5H3M10 10.500H12M10 13H12" stroke="#000" stroke-width="1.300"/></svg>
<div class="a" style="left:188px;top:653px;width:30px;height:22px;box-sizing:border-box;background:#f8f8f8;border:1px solid;border-color:#9a9a9a #fff #f8f8f8 #9a9a9a;box-shadow:1px 0 0 #b0b0b0"></div>
<svg style="left:194px;top:657px" width="17" height="15" viewBox="0 0 17 15" ><path d="M9 8L15.500 14" stroke="#000" stroke-width="2.200"/><path d="M10 9L15 13.500" stroke="#708020" stroke-width="1"/><path d="M9 2L11 4.500L15 0.500" fill="none" stroke="#1010c0" stroke-width="1.800"/><path d="M6.500 1.500C9 0 12 2 11.500 5" fill="none" stroke="#606060" stroke-width="0.800" stroke-dasharray="1 1"/><path d="M1.500 8.500H5.500L7 10V14.500H1.500Z" fill="#fff" stroke="#000" stroke-width="1.200"/><path d="M1 2H2M3.500 4H4.500M1 5.500H2M5 1H6" stroke="#a02020" stroke-width="1"/></svg>
<svg style="left:226px;top:656px" width="17" height="15" viewBox="0 0 17 15" ><path d="M4.500 0.500H11.500L14.500 3.500V11.500H4.500Z" fill="#f0f0f0" stroke="#a0a0a0"/><path d="M0.500 4.500H7.500L10.500 7.500V14.500H0.500Z" fill="#e4e4e4" stroke="#a0a0a0"/><path d="M12 4.500H13M11.500 6.500H13.500M11.500 8.500H13.500M3 8.500H6M3 10.500H8M3 12.500H8" stroke="#a0a0a0"/></svg>
<svg style="left:253px;top:656px" width="16" height="16" viewBox="0 0 16 16" ><rect x="0.500" y="0.500" width="14.500" height="13.500" fill="#fff" stroke="#b0b0b0"/><path d="M6.500 0.500V14M0.500 8.500H15" stroke="#b0b0b0"/><path d="M8.500 2.500H14M8.500 4.500H14M8.500 6.500H14" stroke="#c01010" stroke-width="1.200"/><path d="M7 2V7" stroke="#00d000" stroke-width="1.200" stroke-dasharray="1 1"/><path d="M0.500 7.500H6M3.500 4.500L0.500 7.500L3.500 10.500" fill="none" stroke="#000" stroke-width="1.600"/><path d="M10.500 8V15M7.500 12L10.500 15L13.500 12" fill="none" stroke="#000" stroke-width="1.600"/></svg>
<div class="a" style="left:275px;top:653px;width:30px;height:22px;box-sizing:border-box;background:#f8f8f8;border:1px solid;border-color:#9a9a9a #fff #f8f8f8 #9a9a9a"></div>
<svg style="left:281px;top:657px" width="16" height="16" viewBox="0 0 16 16" ><rect x="0.500" y="0.500" width="14.500" height="13.500" fill="#fff" stroke="#b0b0b0"/><path d="M5.500 0.500V14" stroke="#b0b0b0"/><path d="M8.500 2.500H14M8.500 4.500H14M8.500 6.500H14" stroke="#c01010" stroke-width="1.200"/><path d="M7 2V7" stroke="#00d000" stroke-width="1.200" stroke-dasharray="1 1"/><path d="M10.500 8V15M7.500 12L10.500 15L13.500 12" fill="none" stroke="#000" stroke-width="1.600"/></svg>
<div class="a" style="left:306px;top:654px;width:1px;height:19px;background:#fff"></div>
<svg style="left:313px;top:656px" width="17" height="16" viewBox="0 0 17 16" ><rect x="0.500" y="0.500" width="13" height="10" fill="#fff" stroke="#000"/><rect x="0" y="0" width="14" height="2.200" fill="#06068c"/><path d="M2 4.500H6M2 6.500H6M2 8.500H5" stroke="#000" stroke-width="1"/><path d="M7 5V8M9 4.500V8M11 4V8" stroke="#000" stroke-width="1.200"/><rect x="5" y="7.500" width="5" height="7.500" fill="#000"/><rect x="11.500" y="7.500" width="5" height="7.500" fill="#000"/><rect x="9" y="9" width="3.500" height="3.500" fill="#000"/><rect x="6.500" y="5.500" width="2" height="2" fill="#000"/><rect x="13" y="5.500" width="2" height="2" fill="#000"/><rect x="6.500" y="11" width="1.500" height="2" fill="#fff"/><rect x="13.500" y="11" width="1.500" height="2" fill="#fff"/></svg>

<span class="t" id="t0" style="left:23.5px;top:1.6px;font-size:13px;color:#000;letter-spacing:-0.281px;word-spacing:1.5px;">COM31 - u-center 19.06.01</span>
<span class="t" id="t1" style="left:7px;top:23px;font-size:13px;color:#000;letter-spacing:-0.318px;">File</span>
<span class="t" id="t2" style="left:40px;top:23px;font-size:13px;color:#000;letter-spacing:0.198px;">Edit</span>
<span class="t" id="t3" style="left:76px;top:23px;font-size:13px;color:#000;letter-spacing:-0.318px;">View</span>
<span class="t" id="t4" style="left:117px;top:23px;font-size:13px;color:#000;letter-spacing:-0.172px;">Player</span>
<span class="t" id="t5" style="left:166px;top:23px;font-size:13px;color:#000;letter-spacing:-0.328px;">Receiver</span>
<span class="t" id="t6" style="left:229px;top:23px;font-size:13px;color:#000;letter-spacing:0.410px;">Tools</span>
<span class="t" id="t7" style="left:275px;top:23px;font-size:13px;color:#000;letter-spacing:0.150px;">Window</span>
<span class="t" id="t8" style="left:336px;top:23px;font-size:13px;color:#000;letter-spacing:0.083px;">Help</span>
<span class="t" id="t9" style="left:32px;top:205px;font-size:13px;color:#000;letter-spacing:0.090px;-webkit-text-stroke:0.25px #000;">Messages - UBX - MON (Monitor) - VER (Version)</span>
<span class="t" id="t10" style="left:52px;top:228px;font-size:13px;color:#787878;letter-spacing:-0.087px;">HW2 (Extended Hardware Status)</span>
<span class="t" id="t11" style="left:52px;top:248px;font-size:13px;color:#787878;letter-spacing:-0.087px;">HW3 (Extended Hardware Status)</span>
<span class="t" id="t12" style="left:52px;top:268px;font-size:13px;color:#787878;letter-spacing:-0.129px;">IO (IO System)</span>
<span class="t" id="t13" style="left:52px;top:288px;font-size:13px;color:#787878;letter-spacing:-0.206px;">MSGPP (Message Parse &amp; Process)</span>
<span class="t" id="t14" style="left:52px;top:308px;font-size:13px;color:#787878;letter-spacing:-0.225px;">PATCH (Installed Patches)</span>
<span class="t" id="t15" style="left:52px;top:328px;font-size:13px;color:#787878;letter-spacing:-0.199px;">RF (RF Information)</span>
<span class="t" id="t16" style="left:52px;top:348px;font-size:13px;color:#787878;letter-spacing:-0.403px;">RXBUF (RX Buffer)</span>
<span class="t" id="t17" style="left:52px;top:368px;font-size:13px;color:#787878;letter-spacing:-0.536px;">RXR (RX Ready)</span>
<span class="t" id="t18" style="left:52px;top:388px;font-size:13px;color:#787878;letter-spacing:-0.227px;">SMGR (Sync Manager)</span>
<span class="t" id="t19" style="left:52px;top:408px;font-size:13px;color:#787878;letter-spacing:-0.348px;">TXBUF (TX Buffer)</span>
<span class="t" id="t20" style="left:52px;top:428px;font-size:13px;color:#787878;letter-spacing:-0.365px;">VER (Version)</span>
<span class="t" id="t21" style="left:33px;top:448px;font-size:13px;color:#787878;letter-spacing:0.102px;">NAV (Navigation)</span>
<span class="t" id="t22" style="left:33px;top:468px;font-size:13px;color:#787878;letter-spacing:-0.065px;">RXM (Receiver Manager)</span>
<span class="t" id="t23" style="left:33px;top:488px;font-size:13px;color:#787878;letter-spacing:-0.536px;">SEC (Security)</span>
<span class="t" id="t24" style="left:33px;top:508px;font-size:13px;color:#787878;letter-spacing:-0.017px;">TIM (Timing)</span>
<span class="t" id="t25" style="left:33px;top:528px;font-size:13px;color:#787878;letter-spacing:-0.079px;">UPD (Firmware Update Messages)</span>
<span class="t" id="t26" style="left:33px;top:548px;font-size:13px;color:#787878;letter-spacing:-0.337px;">??-?? (Unknown)</span>
<span class="t" id="t27" style="left:33px;top:568px;font-size:13px;color:#787878;letter-spacing:-0.409px;">??-?? (Custom)</span>
<span class="t" id="t28" style="left:14px;top:588px;font-size:13px;color:#787878;letter-spacing:0.065px;">UNKNOWN</span>
<span class="t" id="t29" style="left:14px;top:608px;font-size:13px;color:#787878;letter-spacing:-0.622px;">CUSTOM</span>
<span class="t" id="t30" style="left:311.5px;top:236px;font-size:12.4px;color:#1c1c1c;transform-origin:0 50%;transform:scaleX(0.8441);">UBX - MON (Monitor) - VER (Version)</span>
<span class="t" id="t31" style="left:311.5px;top:271px;font-size:12.4px;color:#1c1c1c;transform-origin:0 50%;transform:scaleX(0.8530);">Software Version</span>
<span class="t" id="t32" style="left:314.3px;top:292px;font-size:12.4px;color:#1c1c1c;transform-origin:0 50%;transform:scaleX(0.8612);">EXT CORE 1.00 (f10c36)</span>
<span class="t" id="t33" style="left:311.5px;top:315px;font-size:12.4px;color:#1c1c1c;transform-origin:0 50%;transform:scaleX(0.8479);">Hardware Version</span>
<span class="t" id="t34" style="left:314.5px;top:336px;font-size:12.4px;color:#1c1c1c;transform-origin:0 50%;transform:scaleX(0.8687);">00190000</span>
<span class="t" id="t35" style="left:311.5px;top:359px;font-size:12.4px;color:#1c1c1c;transform-origin:0 50%;transform:scaleX(0.8247);">Extension(s)</span>
<span class="t" id="t36" style="left:315.8px;top:376.6px;font-size:12.4px;color:#1c1c1c;transform-origin:0 50%;transform:scaleX(0.8631);">ROM BASE 0x118B2060</span>
<span class="t" id="t37" style="left:315.8px;top:390px;font-size:12.4px;color:#1c1c1c;transform-origin:0 50%;transform:scaleX(0.8629);">FWVER=HPG 1.13</span>
<span class="t" id="t38" style="left:315.8px;top:403.2px;font-size:12.4px;color:#1c1c1c;transform-origin:0 50%;transform:scaleX(0.8620);">PROTVER=27.12</span>
<span class="t" id="t39" style="left:315.8px;top:416.2px;font-size:12.4px;color:#1c1c1c;transform-origin:0 50%;transform:scaleX(0.8487);">MOD=ZED-F9P</span>
<span class="t" id="t40" style="left:315.8px;top:429.2px;font-size:12.4px;color:#1c1c1c;transform-origin:0 50%;transform:scaleX(0.8367);">GPS;GLO;GAL;BDS</span>
<span class="t" id="t41" style="left:315.8px;top:442.2px;font-size:12.4px;color:#1c1c1c;transform-origin:0 50%;transform:scaleX(0.8370);">SBAS;QZSS</span>
<span class="t" id="t42" style="left:99px;top:654px;font-size:13px;color:#a0a0a0;letter-spacing:-0.792px;">Send</span>
<span class="t" id="t43" style="left:160px;top:654px;font-size:13px;color:#000;letter-spacing:-0.562px;">Poll</span>
<div class="a" style="left:75px;top:73px;width:40px;height:27px;box-sizing:border-box;border:3px solid #fb1510;border-radius:4.5px"></div>
<div class="a" style="left:97px;top:197px;width:252.5px;height:35.5px;box-sizing:border-box;border:3px solid #fb1510;border-radius:4.5px"></div>
<div class="a" style="left:307px;top:391px;width:139px;height:18px;box-sizing:border-box;border:3px solid #fb1510;border-radius:4.5px"></div>

</body></html>
